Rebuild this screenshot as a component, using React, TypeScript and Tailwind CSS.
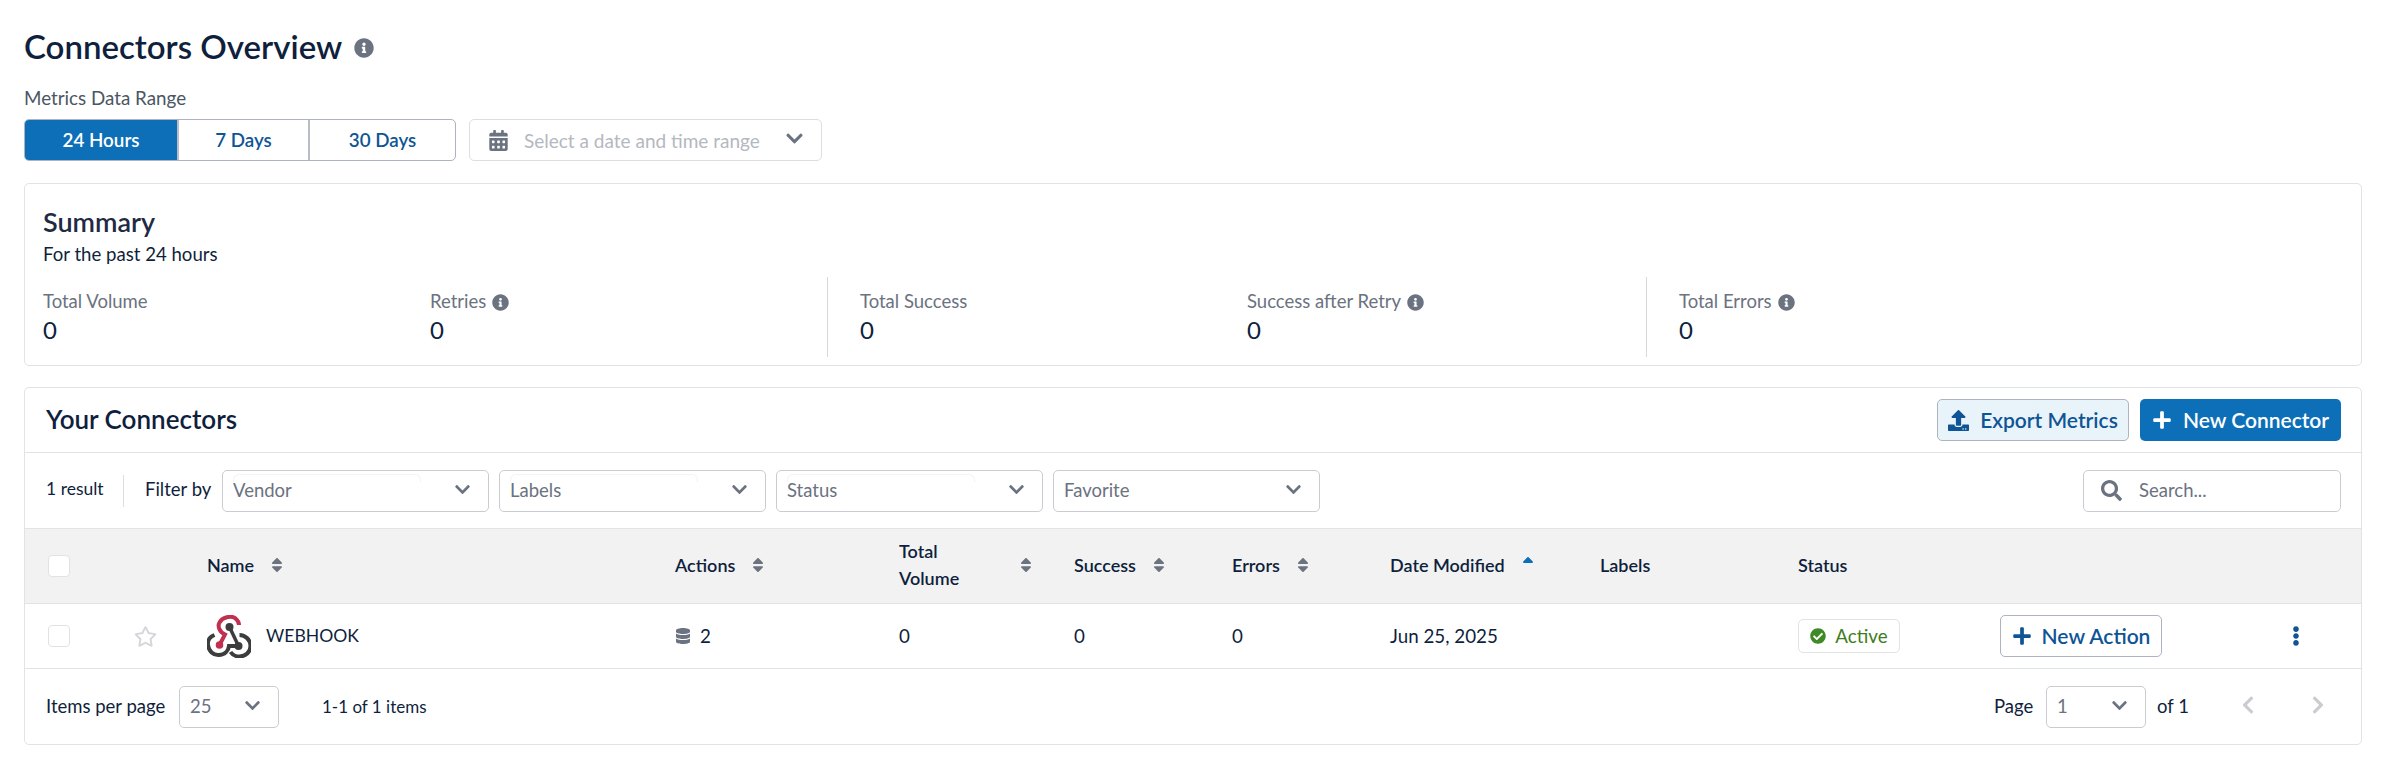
import { ReactNode } from 'react';
import {
  FaCalendarAlt,
  FaCheckCircle,
  FaChevronDown,
  FaChevronLeft,
  FaChevronRight,
  FaDatabase,
  FaEllipsisV,
  FaInfoCircle,
  FaPlus,
  FaRegStar,
  FaSearch,
  FaSort,
  FaSortUp,
  FaUpload,
} from 'react-icons/fa';

const tableGrid = 'grid grid-cols-[86px_73px_468px_224px_175px_158px_158px_210px_198px_202px_287px_74px] pl-[23px] items-center';

function WebhookLogo() {
  return (
    <svg viewBox="6.5 5 44 43" className="w-[44px] h-[43px] shrink-0" fill="none">
      <path d="M19 35 L24.5 24.5 C18.5 21.5 17 16 19 12.5 C22 7 30 5.5 34.5 8 C37 10 38.5 12.5 38.5 15" stroke="#c0304f" strokeWidth="4" />
      <path d="M14 25 C9 27 7 31 7.5 35 C8 41 13 45.5 18.5 45 C24 45 28 41 28.5 36 L38 36" stroke="#3d3d3d" strokeWidth="4" />
      <path d="M39 25 C45 25 50 30 50 36 C50 42 45 46.5 39 46.5 C35 46.5 32 45 30 42" stroke="#3d3d3d" strokeWidth="4" />
      <path d="M29 17 L38 36" stroke="#3d3d3d" strokeWidth="3.5" />
      <circle cx="29" cy="17" r="4" fill="#3d3d3d" />
      <circle cx="38" cy="36" r="4" fill="#3d3d3d" />
      <circle cx="19" cy="35" r="3.8" fill="#c0304f" />
    </svg>
  );
}

function SelectBox({ label, width = 'w-[267px]', notch = false }: { label: string; width?: string; notch?: boolean }) {
  return (
    <div className={`relative ${width} h-[42px] border border-[#c9ccd1] rounded-[5px] flex items-center justify-between pl-[10px] pr-[17px] bg-white`}>
      {notch && <div className="absolute left-[10px] top-[3px] w-[188px] h-[8px] border-t border-x border-[#f3f3f3] rounded-t-[6px]" />}
      <span className="text-[18.5px] text-[#6b7280]">{label}</span>
      <FaChevronDown className="text-[#6b7280] text-[17px] mb-[3px]" />
    </div>
  );
}

function Metric({ label, info = false, width }: { label: string; info?: boolean; width: string }) {
  return (
    <div className={width}>
      <div className="flex items-center gap-[6px] h-[24px] text-[18.5px] text-[#6b7280]">
        {label}
        {info && <FaInfoCircle className="text-[#6b7280] text-[17px]" />}
      </div>
      <div className="text-[24px] leading-[26px] mt-[3px] text-[#0f1f3d]">0</div>
    </div>
  );
}

function HeaderCell({ children, sort = true, active = false }: { children: ReactNode; sort?: boolean; active?: boolean }) {
  return (
    <div className="flex items-center gap-[14px] font-semibold text-[18px] text-[#0f1f3d] mb-[2px]">
      <span>{children}</span>
      {sort && !active && <FaSort className="text-[#6b7280] text-[18px] shrink-0" />}
      {active && <FaSortUp className="text-[#0d6fb8] text-[18px] shrink-0 mb-[2px]" />}
    </div>
  );
}

export default function App() {
  return (
    <div className="w-[2402px] h-[780px] bg-white pl-[24px] pr-[40px] font-['Lato',sans-serif] text-[#0f1f3d] overflow-hidden">
      <div className="flex items-center gap-[12px] h-[40px] mt-[26px]">
        <h1 className="text-[33px] font-semibold leading-none">Connectors Overview</h1>
        <FaInfoCircle className="text-[#6b7280] text-[20px] mt-[3px]" />
      </div>

      <div className="text-[18.8px] text-[#4b5563] mt-[20px] leading-[24px]">Metrics Data Range</div>

      <div className="flex gap-[13px] mt-[9px]">
        <div className="flex h-[42px] w-[432px] border border-[#aeb4bd] rounded-[5px] overflow-hidden font-semibold text-[18.8px]">
          <div className="w-[152px] flex items-center justify-center bg-[#0d6fb8] text-white">24 Hours</div>
          <div className="w-[133px] flex items-center justify-center text-[#0f5595] border-x-2 border-[#b9bec6]">7 Days</div>
          <div className="flex-1 flex items-center justify-center text-[#0f5595]">30 Days</div>
        </div>
        <div className="w-[353px] h-[42px] border border-[#dcdee2] rounded-[5px] flex items-center pl-[18px] pr-[17px]">
          <FaCalendarAlt className="text-[#6b7280] text-[21px]" />
          <span className="ml-[15px] text-[19px] text-[#b4b8bf] mt-[2px]">Select a date and time range</span>
          <FaChevronDown className="ml-auto text-[#6b7280] text-[19px] mb-[3px]" />
        </div>
      </div>

      <section className="mt-[22px] h-[183px] border border-[#e2e3e5] rounded-[5px] pl-[18px]">
        <h2 className="text-[27px] font-semibold leading-[30px] mt-[23px] text-[#1f2a44]">Summary</h2>
        <p className="text-[18.6px] leading-[24px] mt-[5px]">For the past 24 hours</p>
        <div className="flex mt-[11px] h-[80px]">
          <div className="flex w-[785px] border-r border-[#d6d8db]">
            <div className="pt-[13px]"><Metric label="Total Volume" width="w-[387px]" /></div>
            <div className="pt-[13px]"><Metric label="Retries" info width="w-[300px]" /></div>
          </div>
          <div className="flex w-[819px] pl-[32px] border-r border-[#d6d8db]">
            <div className="pt-[13px]"><Metric label="Total Success" width="w-[387px]" /></div>
            <div className="pt-[13px]"><Metric label="Success after Retry" info width="w-[390px]" /></div>
          </div>
          <div className="pl-[32px] pt-[13px]"><Metric label="Total Errors" info width="w-[300px]" /></div>
        </div>
      </section>

      <section className="mt-[21px] h-[358px] border border-[#e2e3e5] rounded-[5px] overflow-hidden">
        <div className="h-[65px] border-b border-[#e2e3e5] flex items-center justify-between pl-[21px] pr-[20px]">
          <h2 className="text-[26px] font-semibold leading-none mb-[2px]">Your Connectors</h2>
          <div className="flex gap-[11px]">
            <button className="w-[192px] h-[42px] border border-[#aeb4bd] rounded-[5px] bg-[#e9f3fa] flex items-center justify-center gap-[11px] text-[#0f5595] font-semibold text-[21px]">
              <FaUpload className="text-[21px]" />
              Export Metrics
            </button>
            <button className="w-[201px] h-[42px] rounded-[5px] bg-[#0d6fb8] flex items-center justify-center gap-[11px] text-white font-semibold text-[21px]">
              <FaPlus className="text-[20px]" />
              New Connector
            </button>
          </div>
        </div>

        <div className="h-[75px] flex items-center pl-[21px] pr-[20px]">
          <span className="text-[17.5px] w-[77px] mb-[2px]">1 result</span>
          <span className="w-px h-[32px] bg-[#dcdee2]" />
          <span className="text-[18.5px] ml-[21px] w-[77px] mb-[2px]">Filter by</span>
          <div className="flex gap-[10px]">
            <SelectBox label="Vendor" notch />
            <SelectBox label="Labels" notch />
            <SelectBox label="Status" notch />
            <SelectBox label="Favorite" />
          </div>
          <div className="ml-auto w-[258px] h-[42px] border border-[#c9ccd1] rounded-[5px] flex items-center pl-[17px]">
            <FaSearch className="text-[#6b7280] text-[21px]" />
            <span className="ml-[17px] text-[18.5px] text-[#6b7280]">Search...</span>
          </div>
        </div>

        <div className={`${tableGrid} h-[76px] bg-[#f2f2f2] border-y border-[#e2e3e5]`}>
          <div className="w-[22px] h-[22px] bg-white border border-[#e0e2e5] rounded-[4px]" />
          <div />
          <HeaderCell>Name</HeaderCell>
          <HeaderCell>Actions</HeaderCell>
          <div className="flex items-center justify-between pr-[39px] font-semibold text-[18px] leading-[27px] mb-[2px]">
            <span>Total<br />Volume</span>
            <FaSort className="text-[#6b7280] text-[18px]" />
          </div>
          <HeaderCell>Success</HeaderCell>
          <HeaderCell>Errors</HeaderCell>
          <HeaderCell active>Date Modified</HeaderCell>
          <HeaderCell sort={false}>Labels</HeaderCell>
          <HeaderCell sort={false}>Status</HeaderCell>
          <div />
          <div />
        </div>

        <div className={`${tableGrid} h-[65px] border-b border-[#e2e3e5] text-[18.8px]`}>
          <div className="w-[22px] h-[22px] bg-white border border-[#e0e2e5] rounded-[4px]" />
          <FaRegStar className="text-[#d4d6da] text-[23px]" />
          <div className="flex items-center gap-[15px]">
            <WebhookLogo />
            <span className="text-[17.6px]">WEBHOOK</span>
          </div>
          <div className="flex items-center gap-[9px]">
            <FaDatabase className="text-[#6b7280] text-[16px]" />
            <span>2</span>
          </div>
          <div>0</div>
          <div>0</div>
          <div>0</div>
          <div>Jun 25, 2025</div>
          <div />
          <div className="w-[102px] h-[34px] border border-[#e2e3e5] rounded-[5px] flex items-center justify-center gap-[9px] text-[#3f7d22]">
            <FaCheckCircle className="text-[#3f8a24] text-[16px]" />
            Active
          </div>
          <button className="w-[162px] h-[42px] border border-[#aeb4bd] rounded-[5px] flex items-center justify-center gap-[10px] text-[#0f5595] font-semibold text-[21px]">
            <FaPlus className="text-[20px]" />
            New Action
          </button>
          <FaEllipsisV className="text-[#0f5595] text-[20px] ml-[-1px]" />
        </div>

        <div className="h-[75px] flex items-center pl-[21px] pr-[33px] text-[18.5px]">
          <span className="w-[133px]">Items per page</span>
          <SelectBox label="25" width="w-[100px]" />
          <span className="ml-[43px] text-[17px]">1-1 of 1 items</span>
          <span className="ml-auto w-[52px]">Page</span>
          <SelectBox label="1" width="w-[100px]" />
          <span className="ml-[11px] w-[32px] whitespace-nowrap">of 1</span>
          <FaChevronLeft className="text-[#c9ccd1] text-[20px] ml-[49px] mb-[3px]" />
          <FaChevronRight className="text-[#c9ccd1] text-[20px] ml-[50px] mb-[3px]" />
        </div>
      </section>
    </div>
  );
}
